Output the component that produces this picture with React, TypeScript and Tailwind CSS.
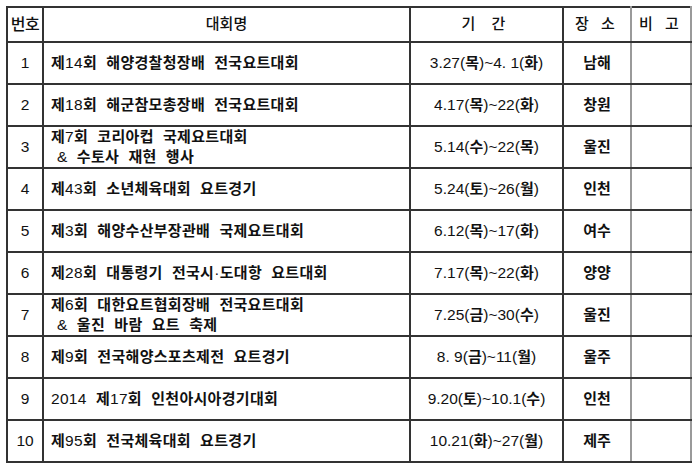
const rows: { no: string; name: string[]; period: string; place: string }[] = [
  { no: "1", name: ["제14회 해양경찰청장배 전국요트대회"], period: "3.27(목)~4. 1(화)", place: "남해" },
  { no: "2", name: ["제18회 해군참모총장배 전국요트대회"], period: "4.17(목)~22(화)", place: "창원" },
  { no: "3", name: ["제7회 코리아컵 국제요트대회", "& 수토사 재현 행사"], period: "5.14(수)~22(목)", place: "울진" },
  { no: "4", name: ["제43회 소년체육대회 요트경기"], period: "5.24(토)~26(월)", place: "인천" },
  { no: "5", name: ["제3회 해양수산부장관배 국제요트대회"], period: "6.12(목)~17(화)", place: "여수" },
  { no: "6", name: ["제28회 대통령기 전국시·도대항 요트대회"], period: "7.17(목)~22(화)", place: "양양" },
  { no: "7", name: ["제6회 대한요트협회장배 전국요트대회", "& 울진 바람 요트 축제"], period: "7.25(금)~30(수)", place: "울진" },
  { no: "8", name: ["제9회 전국해양스포츠제전 요트경기"], period: "8. 9(금)~11(월)", place: "울주" },
  { no: "9", name: ["2014 제17회 인천아시아경기대회"], period: "9.20(토)~10.1(수)", place: "인천" },
  { no: "10", name: ["제95회 전국체육대회 요트경기"], period: "10.21(화)~27(월)", place: "제주" },
];

const cell = "border-2 border-[#333] p-0";
const grayCell = "border-2 border-[#333] border-r-[#9a9a9a] p-0";

// hangul runs get semibold, digits and punctuation stay regular like the scan
function Mixed({ text }: { text: string }) {
  const parts = text.match(/[\uac00-\ud7a3]+|[^\uac00-\ud7a3]+/g) ?? [];
  return (
    <>
      {parts.map((p, i) =>
        /[\uac00-\ud7a3]/.test(p) ? (
          <span key={i} className="font-semibold">{p}</span>
        ) : (
          <span key={i} className="font-normal text-[15.5px]">{p}</span>
        )
      )}
    </>
  );
}

export default function App() {
  return (
    <div
      className="w-[700px] h-[468px] bg-white pt-[6px] pl-[6px] text-[#111]"
      style={{ fontFamily: '"Liberation Sans", "Noto Sans CJK KR", sans-serif' }}
    >
      <table className="table-fixed border-collapse w-[684px] text-[15px]">
        <colgroup>
          <col className="w-[36px]" />
          <col className="w-[367px]" />
          <col className="w-[153px]" />
          <col className="w-[68px]" />
          <col className="w-[60px]" />
        </colgroup>
        <thead>
          <tr className="h-[35px]">
            <th className={`${cell} font-medium text-[16px] tracking-[-0.5px]`}>번호</th>
            <th className={`${cell} font-medium`}>대회명</th>
            <th className={`${cell} font-medium`}>
              <span className="tracking-[6px]">기 간</span>
            </th>
            <th className={`${grayCell} font-medium`}>
              <span className="tracking-[4px]">장 소</span>
            </th>
            <th className={`${grayCell} font-medium`}>
              <span className="tracking-[4px]">비 고</span>
            </th>
          </tr>
        </thead>
        <tbody>
          {rows.map((r) => (
            <tr key={r.no} className="h-[42px]">
              <td className={`${cell} text-center text-[15.5px]`}>{r.no}</td>
              <td className={`${cell} pl-[7px] leading-[20px] tracking-[0.3px] whitespace-pre`}>
                {r.name.map((line, i) => (
                  <div key={i} className={i > 0 ? "pl-[6px]" : ""}>
                    <Mixed text={line.split(" ").join("  ")} />
                  </div>
                ))}
              </td>
              <td className={`${cell} text-center whitespace-pre`}>
                <Mixed text={r.period} />
              </td>
              <td className={`${grayCell} text-center font-semibold`}>{r.place}</td>
              <td className={grayCell}></td>
            </tr>
          ))}
        </tbody>
      </table>
    </div>
  );
}
